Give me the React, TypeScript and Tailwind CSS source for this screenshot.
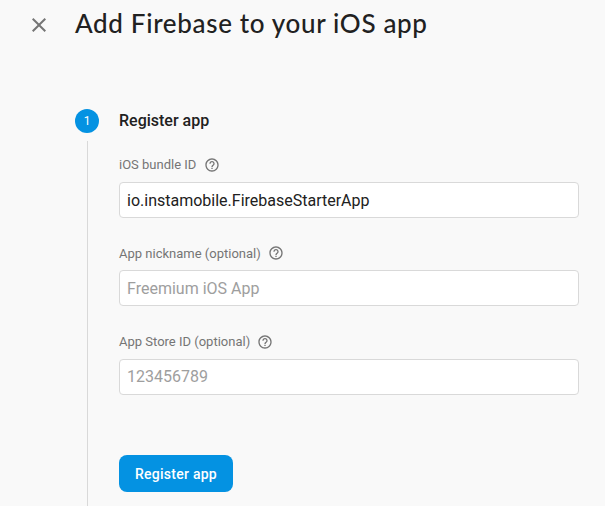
import React from "react";

function HelpIcon() {
  return (
    <svg width="16" height="16" viewBox="0 0 24 24" fill="#757575" className="shrink-0">
      <path d="M11 18h2v-2h-2v2zm1-16C6.48 2 2 6.48 2 12s4.48 10 10 10 10-4.48 10-10S17.52 2 12 2zm0 18c-4.41 0-8-3.59-8-8s3.59-8 8-8 8 3.59 8 8-3.59 8-8 8zm0-14c-2.21 0-4 1.79-4 4h2c0-1.1.9-2 2-2s2 .9 2 2c0 2-3 1.75-3 5h2c0-2.25 3-2.5 3-5 0-2.21-1.79-4-4-4z" />
    </svg>
  );
}

type FieldProps = { label: string; value?: string; placeholder?: string };

function Field({ label, value, placeholder }: FieldProps) {
  return (
    <div className="h-[88.4px]">
      <div className="flex h-4 items-center gap-[7.3px] text-[13px] text-[#757575]">
        <span className="whitespace-nowrap">{label}</span>
        <HelpIcon />
      </div>
      <input
        defaultValue={value}
        placeholder={placeholder}
        className="mt-[9px] block h-9 w-[460px] rounded-[4px] border border-[#d9d9d9] bg-white px-[7px] text-base text-[#212121] outline-none placeholder:text-[#9e9e9e]"
      />
    </div>
  );
}

export default function App() {
  return (
    <main className="h-[506px] w-[605px] overflow-hidden bg-[#f9f9f9] font-['Roboto',sans-serif] text-[#212121]">
      <header className="flex h-[49px] items-center pl-[27px]">
        <svg width="24" height="24" viewBox="0 0 24 24" fill="#757575">
          <path d="M19 6.41L17.59 5 12 10.59 6.41 5 5 6.41 10.59 12 5 17.59 6.41 19 12 13.41 17.59 19 19 17.59 13.41 12 19 6.41z" />
        </svg>
        <h1 className="ml-6 pb-0.5 font-['Lato',sans-serif] text-[26px] font-medium tracking-[0.66px] whitespace-nowrap">Add Firebase to your iOS app</h1>
      </header>
      <section className="flex pt-[60px] pl-[75px]">
        <div className="flex w-6 shrink-0 flex-col items-center">
          <div className="flex size-6 items-center justify-center rounded-full bg-[#0492e2] text-xs text-white">1</div>
          <div className="mt-2 h-[380px] w-px bg-[#d9d9d9]" />
        </div>
        <div className="ml-5">
          <h2 className="h-6 text-base leading-6 font-medium">Register app</h2>
          <div className="mt-6">
            <Field label="iOS bundle ID" value="io.instamobile.FirebaseStarterApp" />
            <Field label="App nickname (optional)" placeholder="Freemium iOS App" />
            <Field label="App Store ID (optional)" placeholder="123456789" />
          </div>
          <button className="mt-[33px] h-[37px] w-[114px] rounded-lg bg-[#0492e2] text-sm font-medium tracking-[0.25px] text-white">Register app</button>
        </div>
      </section>
    </main>
  );
}
